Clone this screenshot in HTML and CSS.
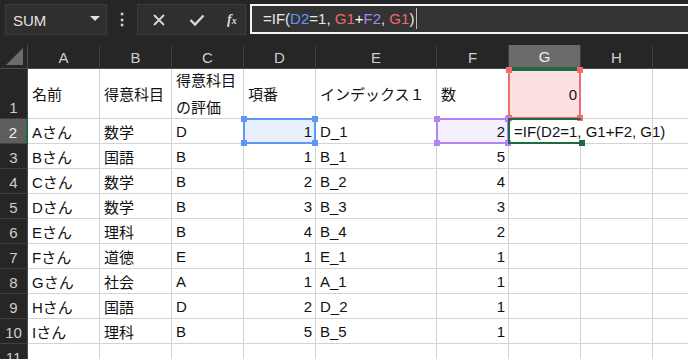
FILE: index.html
```html
<!DOCTYPE html>
<html lang="ja">
<head>
  <meta charset="UTF-8" />
  <title>Sheet</title>
  <link rel="stylesheet" href="styles.css">
</head>
<body>
  <div class="topbar">
    <div class="name-box">
      <span>SUM</span>
      <span class="caret"></span>
    </div>
    <div class="dots">⋮</div>
    <div class="fx-buttons">
      <svg class="icon" width="14" height="14" viewBox="0 0 14 14">
        <path d="M2 2 L12 12 M12 2 L2 12" stroke="#d8d8d8" stroke-width="1.8" fill="none" />
      </svg>
      <svg class="icon" width="16" height="14" viewBox="0 0 16 14">
        <path d="M1.5 7 L6 11.5 L14.5 2.5" stroke="#d8d8d8" stroke-width="2.4" fill="none" />
      </svg>
      <span class="fx">f<small>x</small></span>
    </div>
    <div class="formula-input">=IF(<span class="ref-blue">D2</span>=1, <span class="ref-red">G1</span><span class="plus">+</span><span class="ref-purple">F2</span>, <span class="ref-red">G1</span>)<span class="cursor"></span></div>
  </div>

  <div class="sheet" id="sheet"></div>

  <script>
    const columnas = ["A", "B", "C", "D", "E", "F", "G", "H", ""];
    const filas = [
      ["名前", "得意科目", "得意科目<br>の評価", "項番", "インデックス１", "数", "0", "", ""],
      ["Aさん", "数学", "D", "1", "D_1", "2", "=IF(D2=1, G1+F2, G1)", "", ""],
      ["Bさん", "国語", "B", "1", "B_1", "5", "", "", ""],
      ["Cさん", "数学", "B", "2", "B_2", "4", "", "", ""],
      ["Dさん", "数学", "B", "3", "B_3", "3", "", "", ""],
      ["Eさん", "理科", "B", "4", "B_4", "2", "", "", ""],
      ["Fさん", "道徳", "E", "1", "E_1", "1", "", "", ""],
      ["Gさん", "社会", "A", "1", "A_1", "1", "", "", ""],
      ["Hさん", "国語", "D", "2", "D_2", "1", "", "", ""],
      ["Iさん", "理科", "B", "5", "B_5", "1", "", "", ""],
      ["", "", "", "", "", "", "", "", ""],
    ];
    // columnas con números alineados a la derecha
    const numericas = [3, 5];

    const sheet = document.getElementById("sheet");

    function celda(clase, html) {
      const div = document.createElement("div");
      div.className = clase;
      div.innerHTML = html;
      sheet.appendChild(div);
      return div;
    }

    function marco(cell, clase) {
      const box = document.createElement("div");
      box.className = "box " + clase;
      ["tl", "tr", "bl", "br"].forEach((p) => {
        const h = document.createElement("span");
        h.className = "handle " + p;
        box.appendChild(h);
      });
      cell.appendChild(box);
    }

    const corner = celda("corner", "");
    corner.innerHTML = '<span class="tri"></span>';
    columnas.forEach((c) => {
      celda("col-head" + (c === "G" ? " active" : ""), c);
    });

    filas.forEach((fila, r) => {
      const n = r + 1;
      celda("row-head" + (n === 2 ? " active" : ""), n);
      fila.forEach((valor, c) => {
        let clase = "cell";
        if (numericas.includes(c) && r > 0) clase += " num";
        if (n === 1) clase += " tall";
        const cell = celda(clase, valor);

        if (n === 1 && c === 6) {
          cell.classList.add("num", "fill-red");
          marco(cell, "red");
        }
        if (n === 2 && c === 3) {
          cell.classList.add("fill-blue");
          marco(cell, "blue");
        }
        if (n === 2 && c === 5) {
          cell.classList.add("fill-purple");
          marco(cell, "purple");
        }
        if (n === 2 && c === 6) {
          cell.classList.add("editing");
          const green = document.createElement("div");
          green.className = "box green";
          green.innerHTML = '<span class="handle br"></span>';
          cell.appendChild(green);
        }
      });
    });
  </script>
</body>
</html>
```

FILE: styles.css
```css
html,
body {
  margin: 0;
  padding: 0;
  background: #262626;
  overflow: hidden;
}

body {
  width: 688px;
  height: 359px;
  font-family: "Liberation Sans", "Noto Sans CJK JP", sans-serif;
}

.topbar {
  height: 45px;
  display: flex;
  align-items: flex-start;
  padding-top: 4px;
  padding-left: 5px;
  box-sizing: border-box;
  background: #262626;
}

.name-box {
  width: 102px;
  height: 31px;
  box-sizing: border-box;
  background: #2f2f2f;
  border: 1px solid #3c3c3c;
  display: flex;
  align-items: center;
  justify-content: space-between;
  padding: 2px 6px 0 7px;
  color: #e2e2e2;
  font-size: 15px;
}

.caret {
  width: 0;
  height: 0;
  border-left: 5px solid transparent;
  border-right: 5px solid transparent;
  border-top: 5px solid #e0e0e0;
  margin-top: -4px;
}

.dots {
  width: 30px;
  text-align: center;
  color: #d8d8d8;
  font-size: 16px;
  font-weight: bold;
  line-height: 31px;
}

.fx-buttons {
  width: 109px;
  height: 31px;
  box-sizing: border-box;
  background: #2f2f2f;
  border: 1px solid #3c3c3c;
  display: flex;
  align-items: center;
  padding-left: 14px;
  gap: 23px;
}

.icon {
  display: block;
}

.fx {
  font-family: "Liberation Serif", serif;
  font-style: italic;
  font-weight: bold;
  color: #d8d8d8;
  font-size: 14px;
  margin-left: -1px;
}

.fx small {
  font-size: 10px;
}

.formula-input {
  margin-left: 4px;
  flex: 1;
  height: 30px;
  margin-right: -4px;
  box-sizing: border-box;
  border: 2px solid #f2f2f2;
  border-right: none;
  background: #333333;
  color: #e8e8e8;
  font-size: 15px;
  padding: 4px 0 0 11px;
  display: flex;
  align-items: flex-start;
  white-space: pre;
}

.ref-blue {
  color: #5b9bf6;
}

.ref-red {
  color: #f06868;
}

.ref-purple {
  color: #a885f5;
}

.plus {
  color: #ffffff;
}

.cursor {
  display: inline-block;
  width: 1px;
  height: 21px;
  margin-top: -2px;
  margin-left: 2px;
  background: #bdbdbd;
}

.sheet {
  display: grid;
  grid-template-columns: 28px 72px 72px 72px 72px 121px 72px 72px 72px 72px;
  grid-template-rows: 24px 50px repeat(11, 25px);
  background: #ffffff;
}

.corner {
  background: #262626;
  border-right: 1px solid #4c4c4c;
  border-bottom: 1px solid #4c4c4c;
  position: relative;
}

.tri {
  position: absolute;
  right: 4px;
  bottom: 3px;
  width: 0;
  height: 0;
  border-left: 17px solid transparent;
  border-bottom: 17px solid #6b6b6b;
}

.col-head {
  background: #262626;
  color: #cfcfcf;
  font-size: 15px;
  border-right: 1px solid #3f3f3f;
  border-bottom: 1px solid #4c4c4c;
  display: flex;
  align-items: center;
  justify-content: center;
  padding-top: 1px;
}

.col-head.active {
  background: #6b6b6b;
  color: #f0f0f0;
  border-bottom: 2px solid #1e6b3f;
}

.row-head {
  background: #262626;
  color: #cfcfcf;
  font-size: 15px;
  border-right: 1px solid #4c4c4c;
  border-bottom: 1px solid #404040;
  display: flex;
  align-items: flex-end;
  justify-content: center;
  padding-bottom: 2px;
  box-sizing: border-box;
}

.row-head.active {
  background: #5e5e5e;
  color: #f0f0f0;
  border-right: 2px solid #1e6b3f;
}

.cell {
  position: relative;
  box-sizing: border-box;
  border-right: 1px solid #d4d4d4;
  border-bottom: 1px solid #d4d4d4;
  font-family: "Liberation Sans", "Noto Sans CJK JP", sans-serif;
  font-size: 15px;
  color: #111111;
  display: flex;
  align-items: center;
  padding: 1px 3px 0 4px;
  white-space: nowrap;
}

.cell.tall {
  line-height: 27px;
}

.cell.num {
  justify-content: flex-end;
}

.fill-blue {
  background: #e8f0fd;
}

.fill-purple {
  background: #f4effd;
}

.fill-red {
  background: #fde1e1;
}

.editing {
  border-right: none;
  overflow: visible;
  z-index: 4;
  padding-left: 5px;
  padding-top: 0;
}

.box {
  position: absolute;
  top: -1px;
  left: -1px;
  right: -1px;
  bottom: -1px;
  border: 2px solid;
  z-index: 2;
  pointer-events: none;
}

.box.blue {
  border-color: #5e97f6;
}

.box.purple {
  border-color: #b383f6;
}

.box.red {
  border-color: #f26d6d;
  border-top-color: #1e6b3f;
  top: 0;
}

.box.green {
  border-color: #1e6b3f;
  border-right: none;
  right: 0;
  z-index: 3;
}

.handle {
  position: absolute;
  display: block;
  width: 6px;
  height: 6px;
}

.blue .handle {
  background: #5e97f6;
}

.purple .handle {
  background: #b383f6;
}

.red .handle {
  background: #f26d6d;
}

.green .handle {
  background: #1e6b3f;
}

.handle.tl {
  top: -4px;
  left: -4px;
}

.handle.tr {
  top: -4px;
  right: -4px;
}

.handle.bl {
  bottom: -4px;
  left: -4px;
}

.handle.br {
  bottom: -4px;
  right: -4px;
}
```
